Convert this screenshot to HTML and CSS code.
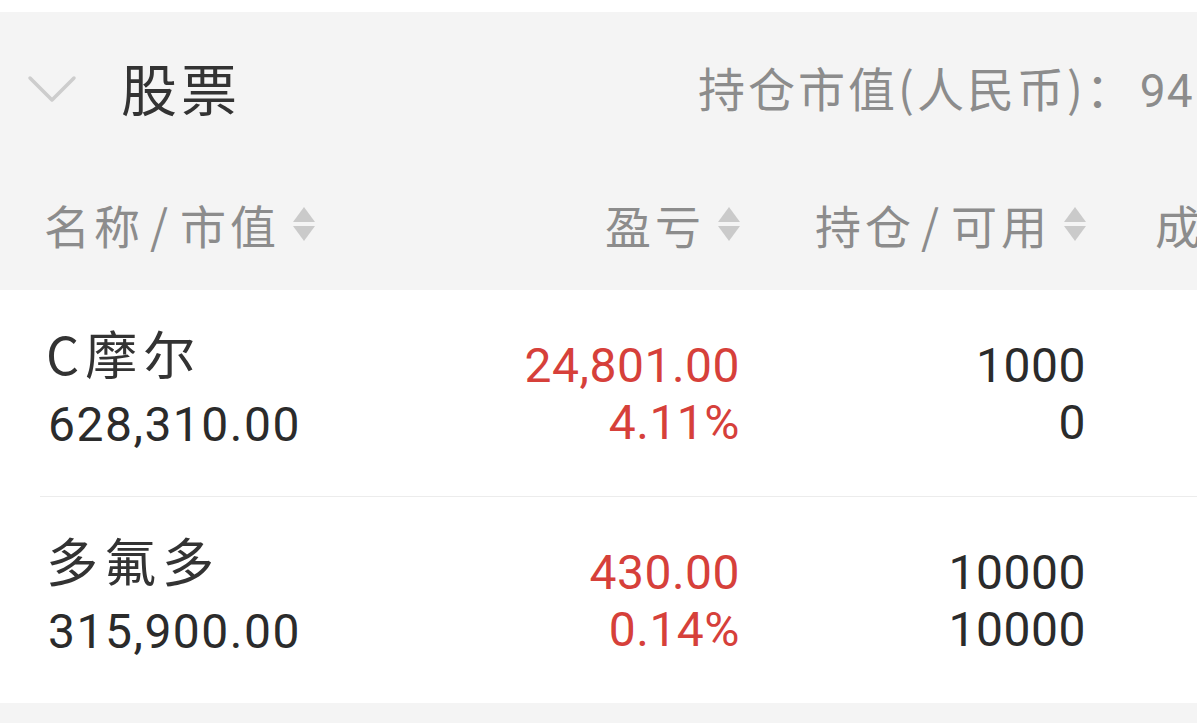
FILE: index.html
```html
<!DOCTYPE html>
<html lang="zh-CN">
<head>
  <meta charset="UTF-8">
  <title>持仓 - 股票</title>
  <link rel="stylesheet" href="styles.css">
</head>
<body>
  <div class="top-gap"></div>

  <div class="panel">
    <!-- Section title + total market value -->
    <div class="title-bar">
      <div class="title-left">
        <svg class="chevron" width="50" height="30" viewBox="0 0 50 30">
          <polyline points="3,4 25,26 47,4" fill="none" stroke="#cdcdcd" stroke-width="3.5" stroke-linecap="round" stroke-linejoin="round"/>
        </svg>
        <h1>股票</h1>
      </div>
      <div class="summary">持仓市值(人民币)：<span class="summary-num">94</span></div>
    </div>

    <!-- Column headers -->
    <div class="grid col-head">
      <div class="head-cell">名称<span class="slash">/</span>市值<span class="sort"></span></div>
      <div class="head-cell right">盈亏<span class="sort"></span></div>
      <div class="head-cell right">持仓<span class="slash">/</span>可用<span class="sort"></span></div>
      <div class="head-cell more">成</div>
    </div>
  </div>

  <div class="list">
    <div class="grid row">
      <div class="cell">
        <div class="name">C摩尔</div>
        <div class="num dark">628,310.00</div>
      </div>
      <div class="cell right offset">
        <div class="num red">24,801.00</div>
        <div class="num red">4.11%</div>
      </div>
      <div class="cell right offset">
        <div class="num dark">1000</div>
        <div class="num dark">0</div>
      </div>
    </div>

    <div class="divider"></div>

    <div class="grid row">
      <div class="cell">
        <div class="name">多氟多</div>
        <div class="num dark">315,900.00</div>
      </div>
      <div class="cell right offset">
        <div class="num red">430.00</div>
        <div class="num red">0.14%</div>
      </div>
      <div class="cell right offset">
        <div class="num dark">10000</div>
        <div class="num dark">10000</div>
      </div>
    </div>
  </div>

  <div class="bottom-gap"></div>
</body>
</html>
```

FILE: styles.css
```css
body, h1 {
  margin: 0;
  padding: 0;
}

*, *::before, *::after {
  box-sizing: border-box;
}

body {
  font-family: "Noto Sans CJK SC", "Noto Sans", sans-serif;
  background-color: #fff;
  width: 1197px;
  height: 723px;
  overflow: hidden;
  color: #333;
}

.top-gap {
  height: 12px;
  background-color: #fff;
}

.panel {
  background-color: #f4f4f4;
}

/* Title bar */
.title-bar {
  display: flex;
  align-items: center;
  height: 160px;
  padding-bottom: 11px;
  white-space: nowrap;
}

.title-left {
  flex: 0 0 698px;
  display: flex;
  align-items: center;
  padding-left: 27px;
}

.chevron {
  display: block;
  margin-top: 4px;
}

h1 {
  font-size: 56px;
  font-weight: normal;
  color: #333;
  margin-left: 44px;
  letter-spacing: 4px;
}

.summary {
  font-size: 47px;
  color: #8c8c8c;
  letter-spacing: 3px;
}

.summary-num {
  font-family: Roboto, sans-serif;
  font-size: 46px;
  letter-spacing: 1px;
  margin-left: 4px;
}

/* Shared grid for header and rows */
.grid {
  display: grid;
  grid-template-columns: 400px 296px 346px 1fr;
  padding-left: 44px;
}

.col-head {
  height: 118px;
  padding-bottom: 15px;
  align-items: center;
  white-space: nowrap;
}

.head-cell {
  display: flex;
  align-items: center;
  font-size: 46px;
  letter-spacing: 4px;
  color: #8c8c8c;
}

.head-cell.right {
  justify-content: flex-end;
}

.head-cell.more {
  padding-left: 69px;
}

.slash {
  margin: 0 8px 0 6px;
}

/* Up/down sort arrows */
.sort {
  display: inline-flex;
  flex-direction: column;
  gap: 4px;
  margin-left: 13px;
}

.sort::before,
.sort::after {
  content: "";
  width: 0;
  height: 0;
  border-left: 11px solid transparent;
  border-right: 11px solid transparent;
}

.sort::before {
  border-bottom: 15px solid #cacaca;
}

.sort::after {
  border-top: 15px solid #cacaca;
}

/* Rows */
.list {
  background-color: #fff;
}

.row {
  height: 206px;
  padding-top: 31px;
  align-items: start;
  white-space: nowrap;
}

.cell {
  display: flex;
  flex-direction: column;
}

.cell.right {
  align-items: flex-end;
}

.cell.offset {
  padding-top: 16px;
}

.name {
  font-size: 52px;
  line-height: 64px;
  letter-spacing: 6px;
  color: #333;
  margin-left: 2px;
}

.num {
  font-family: Roboto, "Noto Sans", sans-serif;
  font-size: 48px;
  line-height: 57px;
  letter-spacing: 0.5px;
}

.cell:first-child .num {
  line-height: 64px;
  margin-top: 8px;
  margin-left: 4px;
  letter-spacing: 1.5px;
}

.dark {
  color: #2b2b2b;
}

.red {
  color: #d6403a;
}

.divider {
  height: 1px;
  margin-left: 40px;
  background-color: #ececec;
}

.bottom-gap {
  height: 40px;
  background-color: #f4f4f4;
}
```
